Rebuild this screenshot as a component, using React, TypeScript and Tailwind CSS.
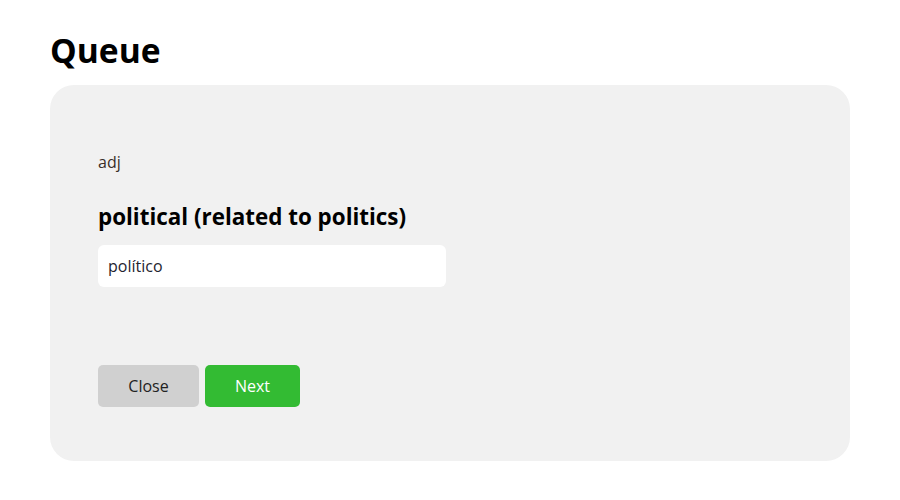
export default function App() {
  return (
    <div
      className="min-h-[500px] bg-white px-[50px] pt-[26px]"
      style={{ fontFamily: '"Open Sans", sans-serif' }}
    >
      <h1 className="text-[33.6px] font-bold leading-[48px] text-black">Queue</h1>
      <div className="mt-[11px] h-[376px] w-[800px] rounded-[24px] bg-[#f1f1f1] px-[48px] pt-[66px]">
        <div className="text-[16px] leading-[22px] text-[#3a2e28]">adj</div>
        <h2 className="mt-[28px] text-[22.4px] font-bold leading-[32px] text-black">
          political (related to politics)
        </h2>
        <input
          defaultValue="político"
          className="mt-[12px] block h-[42px] w-[348px] rounded-[6px] bg-white px-[10px] text-[16px] text-[#1f2430] outline-none"
        />
        <div className="mt-[78px] flex gap-[6px]">
          <button className="h-[42px] w-[101px] rounded-[5px] bg-[#d0d0d0] text-[16px] text-[#222]">
            Close
          </button>
          <button className="h-[42px] w-[95px] rounded-[5px] bg-[#33bb33] text-[16px] text-white">
            Next
          </button>
        </div>
      </div>
    </div>
  );
}
